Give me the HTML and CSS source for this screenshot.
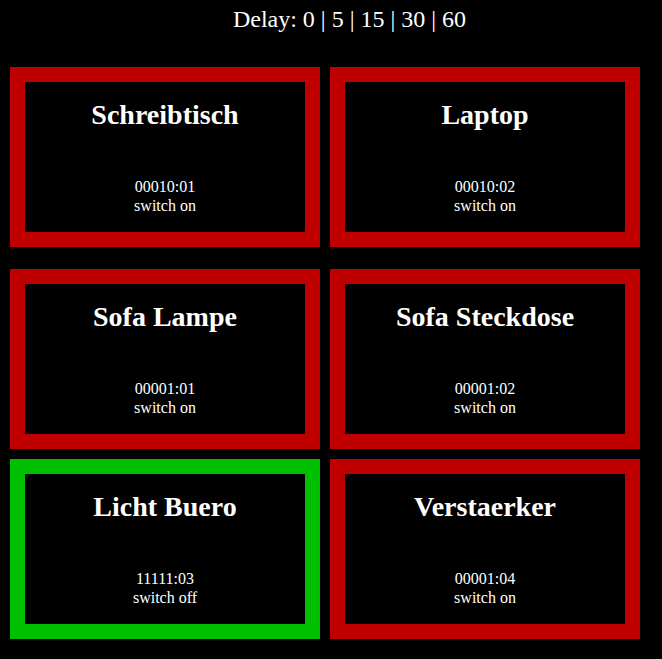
FILE: index.html
```html
<!DOCTYPE html>
<html>
<head>
<meta charset="utf-8">
<link rel="stylesheet" href="styles.css">
</head>
<body>
<div class="delay">Delay: 0 | 5 | 15 | 30 | 60</div>
<div class="grid">
  <div class="row row-first">
    <div class="card off">
      <div class="name">Schreibtisch</div>
      <div class="code">00010:01</div>
      <div class="action">switch on</div>
    </div>
    <div class="card off">
      <div class="name">Laptop</div>
      <div class="code">00010:02</div>
      <div class="action">switch on</div>
    </div>
  </div>
  <div class="row">
    <div class="card off">
      <div class="name">Sofa Lampe</div>
      <div class="code">00001:01</div>
      <div class="action">switch on</div>
    </div>
    <div class="card off">
      <div class="name">Sofa Steckdose</div>
      <div class="code">00001:02</div>
      <div class="action">switch on</div>
    </div>
  </div>
  <div class="row">
    <div class="card on">
      <div class="name">Licht Buero</div>
      <div class="code">11111:03</div>
      <div class="action">switch off</div>
    </div>
    <div class="card off">
      <div class="name">Verstaerker</div>
      <div class="code">00001:04</div>
      <div class="action">switch on</div>
    </div>
  </div>
</div>
</body>
</html>
```

FILE: styles.css
```css
html, body {
  margin: 0;
  padding: 0;
  background: #000;
  color: #fff;
  font-family: "Liberation Serif", "Times New Roman", serif;
}

.delay {
  font-size: 24px;
  line-height: 28px;
  padding-top: 5px;
  padding-left: 37px;
  text-align: center;
}

.grid {
  display: flex;
  flex-direction: column;
  gap: 10px;
  padding: 34px 0 0 10px;
}

.row {
  display: flex;
  gap: 10px;
}

.row-first {
  margin-bottom: 12px;
}

.card {
  box-sizing: border-box;
  width: 310px;
  height: 180px;
  border: 15px solid #c00000;
  text-align: center;
  display: flex;
  flex-direction: column;
}

.card.on {
  border-color: #00c000;
}

.name {
  font-size: 28px;
  font-weight: bold;
  line-height: 32px;
  margin-top: 17px;
}

.code, .action {
  font-size: 16px;
  line-height: 18px;
}

.code {
  margin-top: 47px;
}

.action {
  margin-top: 1px;
}
```
